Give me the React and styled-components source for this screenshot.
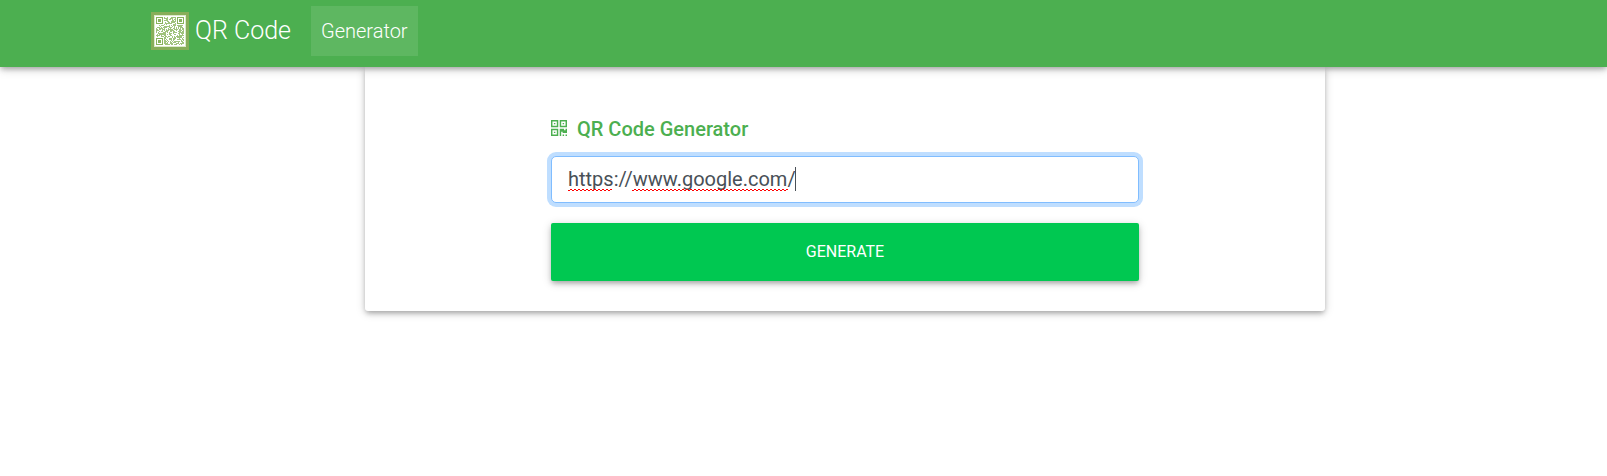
import React, { useState } from "react";
import styled, { createGlobalStyle } from "styled-components";

const GlobalStyle = createGlobalStyle`
  *, *::before, *::after { box-sizing: border-box; }
  body {
    min-height: 100vh;
    margin: 0;
    background: #fff;
    color: #212529;
    font-family: Roboto, "Liberation Sans", sans-serif;
    font-size: 20px;
    line-height: 30px;
  }
  #root { min-height: 100vh; }
`;

const elevation = "0 3px 5px -1px rgba(0, 0, 0, 0.26), 0 2px 10px 0 rgba(0, 0, 0, 0.18)";

const Navbar = styled.header`
  position: relative;
  z-index: 1;
  padding: 6px 0 11px;
  background: #4caf50;
  box-shadow: ${elevation};
  font-weight: 300;
`;

const Container = styled.div`
  max-width: 1305px;
  margin: 0 auto;
`;

const NavRow = styled(Container)`
  display: flex;
  align-items: center;
  gap: 20px;
`;

const Brand = styled.a`
  display: flex;
  align-items: center;
  gap: 6px;
  color: #fff;
  font-size: 25px;
  text-decoration: none;
`;

const NavLink = styled.a`
  padding: 10px;
  background: rgba(255, 255, 255, 0.1);
  color: #fff;
  text-decoration: none;
`;

const Content = styled(Container)`
  display: grid;
  grid-template-columns: 214fr 960fr 131fr;
  padding-bottom: 20px;
`;

const Card = styled.main`
  grid-column: 2;
  display: flex;
  justify-content: center;
  padding: 47px 20px 30px;
  border-radius: 0 0 3px 3px;
  background: #fff;
  box-shadow: ${elevation};
`;

const Form = styled.form`
  display: flex;
  flex-direction: column;
  width: 100%;
  max-width: 588px;
`;

const Label = styled.label`
  display: flex;
  align-items: center;
  gap: 10px;
  margin-bottom: 12px;
  color: #4caf50;
  font-weight: 500;
`;

const Field = styled.div`
  position: relative;
  margin-bottom: 20px;
`;

const TextInput = styled.input`
  display: block;
  width: 100%;
  height: 47px;
  padding: 0 16px 2px;
  border: 1px solid #80bdff;
  border-radius: 5px;
  outline: none;
  background: #fff;
  box-shadow: 0 0 0 4px #bfdeff;
  color: #495057;
  font: inherit;
`;

const Marks = styled.svg`
  position: absolute;
  top: 0;
  left: 17px;
  pointer-events: none;
`;

const Button = styled.button`
  height: 58px;
  border: 0;
  border-radius: 2px;
  background: #00c851;
  box-shadow: ${elevation};
  color: #fff;
  font: inherit;
  font-size: 16px;
  font-weight: 400;
  text-transform: uppercase;
  cursor: pointer;
`;

const SIZE = 28;
const inFinder = (x, y) => (x < 8 && (y < 8 || y > 19)) || (x > 19 && y < 8);

function modulePath() {
  let seed = 77;
  let d = "";
  for (let y = 0; y < SIZE; y += 1) {
    for (let x = 0; x < SIZE; x += 1) {
      seed = (seed * 1103515245 + 12345) % 2147483648;
      if (!inFinder(x, y) && seed / 2147483648 < 0.55) d += `M${x} ${y}h1v1h-1z`;
    }
  }
  return d;
}

const modules = modulePath();

function Logo() {
  return (
    <svg width="38" height="38" viewBox="0 0 38 38" aria-hidden="true">
      <rect width="38" height="38" fill="#87ae59" />
      <rect x="3" y="3" width="32" height="32" fill="#dce9ca" />
      <rect x="4" y="4" width="30" height="30" fill="#fff" />
      <g transform="translate(5 5)" fill="#88b45c">
        <path d={modules} opacity="0.8" />
        {[[0, 0], [21, 0], [0, 21]].map(([x, y]) => (
          <g key={`${x}-${y}`} transform={`translate(${x} ${y})`}>
            <path fillRule="evenodd" d="M0 0h7v7h-7zM1 1v5h5v-5z" />
            <rect x="2" y="2" width="3" height="3" />
          </g>
        ))}
      </g>
    </svg>
  );
}

function QrIcon() {
  return (
    <svg
      width="16"
      height="18"
      viewBox="0 0 11 11"
      preserveAspectRatio="xMinYMin meet"
      fill="currentColor"
      fillRule="evenodd"
      aria-hidden="true"
    >
      <path d="M0 0h5v5h-5zM1 1v3h3v-3zM2 2h1v1h-1z" />
      <path d="M6 0h5v5h-5zM7 1v3h3v-3zM8 2h1v1h-1z" />
      <path d="M0 6h5v5h-5zM1 7v3h3v-3zM2 8h1v1h-1z" />
      <path d="M11 6v3h-3v-1h-1v3h-1v-5h3v1h1v-1zM8 10h1v1h-1zM10 10h1v1h-1z" />
    </svg>
  );
}

// Spelling underline: a solid two-pixel baseline with a tooth every four pixels.
function wave(from, to) {
  let d = "";
  for (let x = from; x < to; x += 4) d += `M${x} 34h2v1h-2zM${x + 2} 33h2v1h-2z`;
  return d;
}

export default function App() {
  const [url, setUrl] = useState("https://www.google.com/");
  return (
    <>
      <GlobalStyle />
      <Navbar>
        <NavRow as="nav">
          <Brand href="#">
            <Logo />
            QR Code
          </Brand>
          <NavLink href="#" aria-current="page">Generator</NavLink>
        </NavRow>
      </Navbar>
      <Content>
        <Card>
          <Form onSubmit={(e) => e.preventDefault()}>
            <Label htmlFor="url">
              <QrIcon />
              QR Code Generator
            </Label>
            <Field>
              <TextInput id="url" type="text" value={url} onChange={(e) => setUrl(e.target.value)} />
              <Marks width="230" height="47" aria-hidden="true">
                <path d={`${wave(0, 44)}${wave(64, 218)}`} fill="#f00" shapeRendering="crispEdges" />
                <rect x="227" y="11" width="1" height="24" fill="#495057" shapeRendering="crispEdges" />
              </Marks>
            </Field>
            <Button type="submit">Generate</Button>
          </Form>
        </Card>
      </Content>
    </>
  );
}
